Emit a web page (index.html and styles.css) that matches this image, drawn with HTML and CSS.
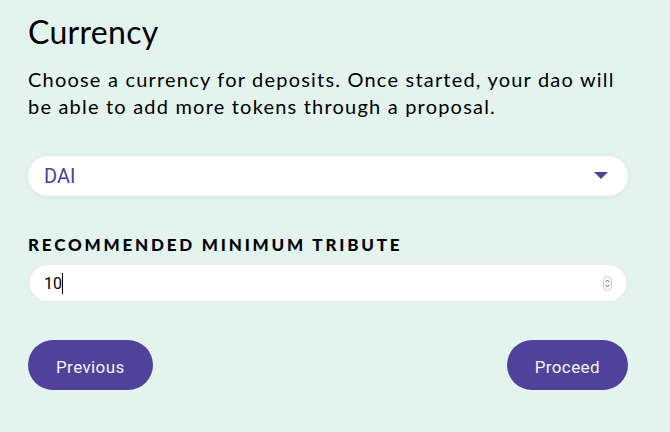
FILE: index.html
```html
<!doctype html>
<html lang="en">
<head>
  <meta charset="utf-8">
  <title>New DAO - Currency</title>
  <link rel="stylesheet" href="styles.css">
</head>
<body>

	<div class="step">
		<h1>Currency</h1>
		<p class="intro">Choose a currency for deposits. Once started, your dao will be able to add more tokens through a proposal.</p>

		<div class="select">
			<span class="select-value">DAI</span>
			<svg class="select-arrow" width="14" height="8" viewBox="0 0 14 8"><path d="M0 0 H14 L7 7 Z" fill="#50419a"/></svg>
		</div>

		<h3 class="label">Recommended Minimum Tribute</h3>
		<div class="field">
			<span class="field-value">10</span><span class="caret"></span>
			<svg class="spinner" width="9" height="15" viewBox="0 0 9 15">
				<rect x="0.5" y="0.5" width="8" height="14" rx="4" fill="#fff" stroke="#c8c8c8"/>
				<path d="M2.8 6 L4.5 4 L6.2 6 M2.8 9 L4.5 11 L6.2 9" fill="none" stroke="#555" stroke-width="0.9"/>
			</svg>
		</div>

		<div class="actions">
			<button class="btn">Previous</button>
			<button class="btn">Proceed</button>
		</div>
	</div>

</body>
</html>
```

FILE: styles.css
```css
body {
	margin			: 0;
	background		: #e3f4ee;
	font-family		: Lato, sans-serif;
	color			: #000;
}

.step {
	padding			: 12px 42px 0 28px;
}

h1 {
	font-size		: 32px;
	font-weight		: 400;
	letter-spacing		: 0.3px;
	margin			: 0 0 14px;
	line-height		: 40px;
}

.intro {
	font-size		: 20px;
	line-height		: 27px;
	letter-spacing		: 1.2px;
	margin			: 0 0 36px;
}

.select {
	display			: flex;
	align-items		: center;
	justify-content	: space-between;
	height			: 40px;
	padding			: 0 20px 0 16px;
	background		: #fff;
	border-radius		: 20px;
	box-shadow		: 0 1px 5px rgba(0, 0, 0, 0.08);
}

.select-value {
	font-family		: Roboto, sans-serif;
	font-size		: 20px;
	color			: #50419a;
}

.label {
	font-size		: 17px;
	font-weight		: 900;
	letter-spacing		: 2.8px;
	text-transform		: uppercase;
	margin			: 40px 0 10px;
	line-height		: 17px;
}

.field {
	display			: flex;
	align-items		: center;
	height			: 36px;
	padding			: 0 14px 0 14px;
	background		: #fff;
	border			: 2px solid #ececec;
	border-radius		: 20px;
	font-family		: Roboto, sans-serif;
	font-size		: 16px;
}

.caret {
	width			: 1.5px;
	height			: 21px;
	background		: #000;
}

.spinner {
	margin-left		: auto;
}

.actions {
	display			: flex;
	justify-content	: space-between;
	margin-top		: 37px;
}

.btn {
	height			: 50px;
	padding			: 3px 28px 0;
	border			: none;
	border-radius		: 25px;
	background		: #50419a;
	color			: #f4f2fb;
	font-family		: Roboto, sans-serif;
	font-size		: 17px;
	letter-spacing		: 0.4px;
}
```
